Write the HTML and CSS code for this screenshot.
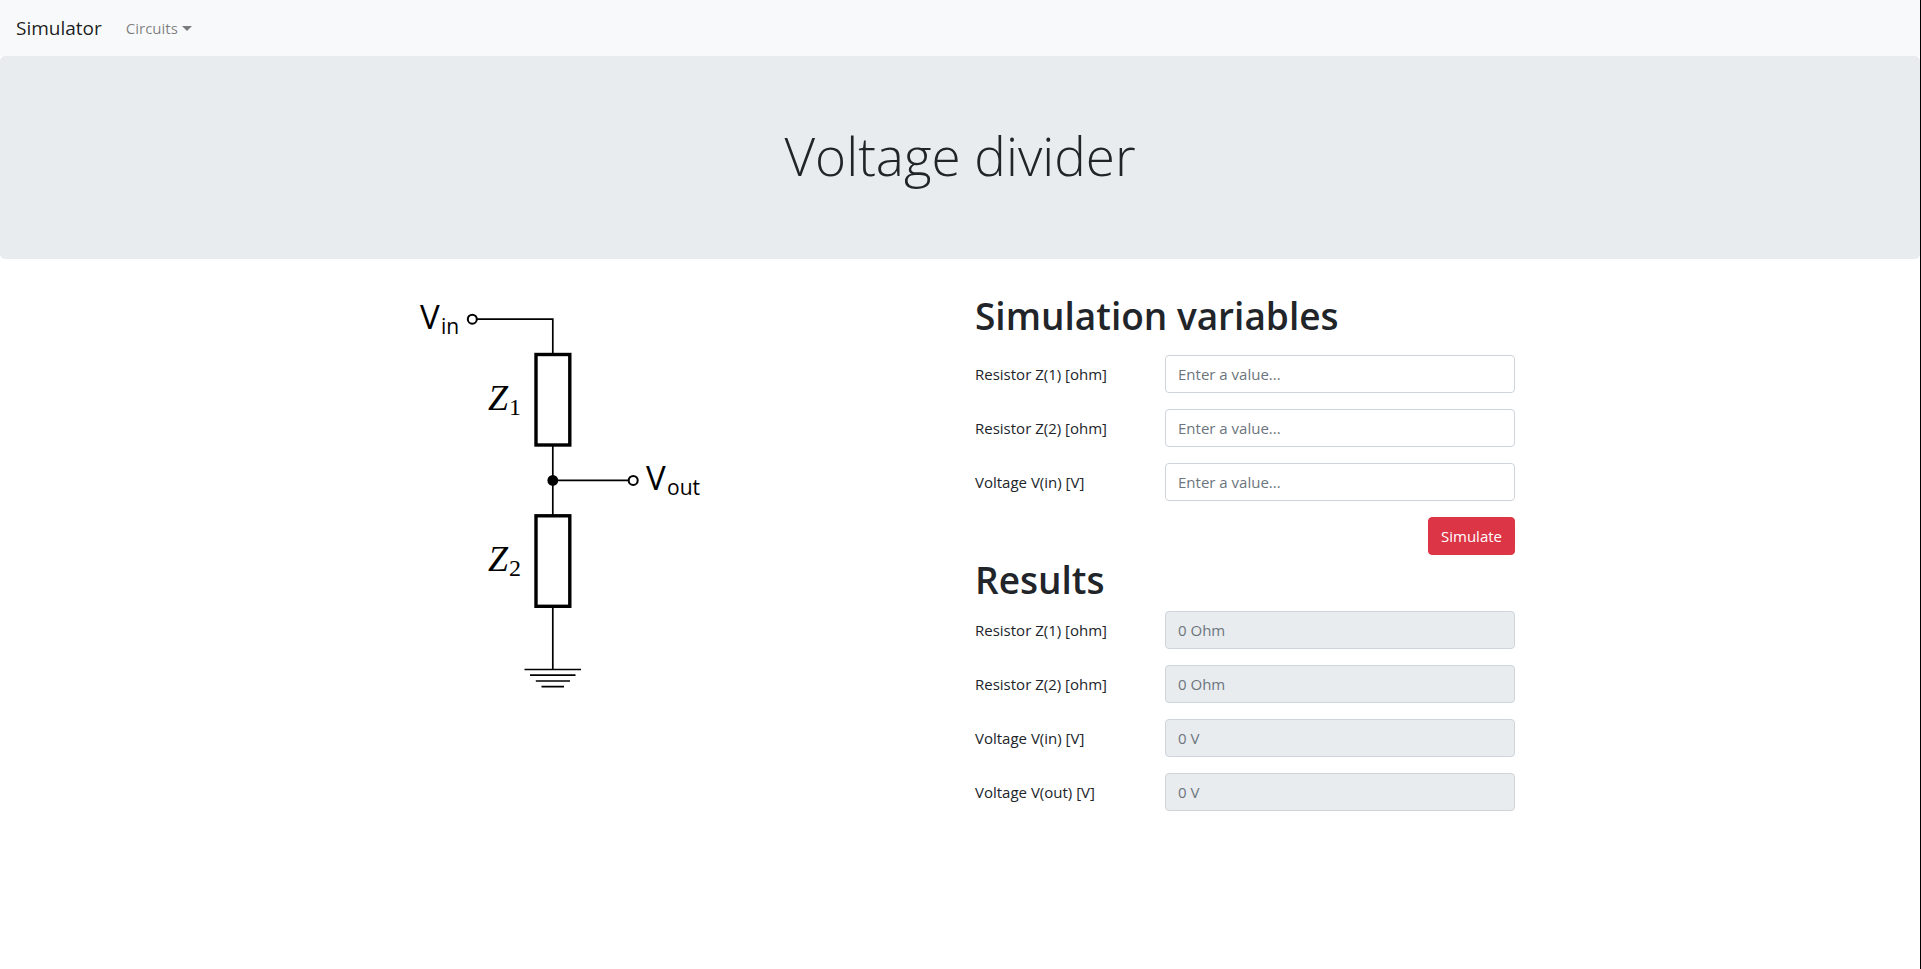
FILE: index.html
```html
<!DOCTYPE html>
<html lang="en">
<head>
<meta charset="utf-8">
<title>Voltage divider</title>
<link rel="stylesheet" href="styles.css">
</head>
<body>
<nav class="navbar">
  <a class="brand" href="#">Simulator</a>
  <button class="dropdown" type="button">Circuits<span class="caret"></span></button>
</nav>
<header class="jumbotron">
  <h1 class="display">Voltage divider</h1>
</header>
<main class="container">
  <div class="col">
    <svg class="circuit" viewBox="0 0 300 400" role="img" aria-label="Voltage divider circuit">
      <g fill="none" stroke="#000" stroke-width="1.7">
        <path d="M72 28.2H147.8V63M147.8 154V224M147.8 189.4H223.500M147.8 316V378.500"/>
        <circle cx="67.300" cy="28.200" r="4.500" stroke-width="2"/>
        <circle cx="228.200" cy="189.400" r="4.500" stroke-width="2"/>
        <path d="M119.500 378.500H176M125 384.200H170.500M130.800 390H165M136.500 395.700H159"/>
      </g>
      <g fill="#fff" stroke="#000" stroke-width="3.400">
        <rect x="131" y="63.500" width="33.800" height="90.500"/>
        <rect x="131" y="224.800" width="33.800" height="90.500"/>
      </g>
      <circle cx="147.800" cy="189.400" r="5.400"/>
      <text class="volt" x="15" y="38">V</text>
      <text class="volt-sub" x="36" y="43">in</text>
      <text class="volt" x="241" y="199">V</text>
      <text class="volt-sub" x="262" y="204">out</text>
      <text class="imp" x="83" y="119">Z</text>
      <text class="imp-sub" x="104" y="124">1</text>
      <text class="imp" x="83" y="280">Z</text>
      <text class="imp-sub" x="104" y="285">2</text>
    </svg>
  </div>
  <div class="col">
    <form class="form">
      <h2 class="heading heading-wide">Simulation variables</h2>
      <div class="row"><label for="z1">Resistor Z(1) [ohm]</label><input id="z1" type="text" placeholder="Enter a value..."></div>
      <div class="row"><label for="z2">Resistor Z(2) [ohm]</label><input id="z2" type="text" placeholder="Enter a value..."></div>
      <div class="row"><label for="vin">Voltage V(in) [V]</label><input id="vin" type="text" placeholder="Enter a value..."></div>
      <button class="submit" type="button">Simulate</button>
    </form>
    <section class="form">
      <h2 class="heading">Results</h2>
      <div class="row"><label for="rz1">Resistor Z(1) [ohm]</label><input id="rz1" type="text" placeholder="0 Ohm" readonly></div>
      <div class="row"><label for="rz2">Resistor Z(2) [ohm]</label><input id="rz2" type="text" placeholder="0 Ohm" readonly></div>
      <div class="row"><label for="rvin">Voltage V(in) [V]</label><input id="rvin" type="text" placeholder="0 V" readonly></div>
      <div class="row"><label for="rvout">Voltage V(out) [V]</label><input id="rvout" type="text" placeholder="0 V" readonly></div>
    </section>
  </div>
</main>
</body>
</html>
```
FILE: styles.css
```css
* {
  box-sizing: border-box;
}

body {
  margin: 0;
  min-height: 100vh;
  border-right: 1px solid #000;
  background: #fff;
  color: #212529;
  font: 400 15px/24px "Segoe UI", "Open Sans", "Noto Sans", sans-serif;
}

h1,
h2 {
  margin: 0;
}

.navbar {
  display: flex;
  align-items: center;
  gap: 24px;
  padding: 8px 16px;
  background: #f8f9fa;
}

.brand {
  padding: 5px 0;
  color: rgba(0, 0, 0, 0.9);
  font-size: 19px;
  line-height: 30px;
  text-decoration: none;
}

.dropdown {
  display: flex;
  align-items: center;
  gap: 4px;
  padding: 8px 0;
  border: 0;
  background: none;
  color: rgba(0, 0, 0, 0.5);
  font: inherit;
}

.caret {
  border: 5px solid transparent;
  border-top-color: currentColor;
  border-bottom: 0;
}

.jumbotron {
  padding: 66px 32px 70px;
  border-radius: 5px;
  background: #e9ecef;
  text-align: center;
}

.display {
  font-size: 53px;
  font-weight: 300;
  line-height: 67px;
}

.container {
  display: grid;
  grid-template-columns: 1fr 1fr;
  gap: 30px;
  max-width: 1140px;
  margin: 32px auto;
  padding: 0 15px;
}

.circuit {
  display: block;
  width: 300px;
  max-width: 100%;
}

.volt,
.volt-sub {
  font-family: "Open Sans", sans-serif;
  font-size: 33px;
}

.volt-sub {
  font-size: 21px;
}

.imp,
.imp-sub {
  font-family: "Liberation Serif", serif;
  font-size: 36px;
  font-style: italic;
}

.imp-sub {
  font-size: 24px;
  font-style: normal;
}

.form {
  display: flex;
  flex-direction: column;
}

.heading {
  margin-bottom: 6px;
  font-size: 37px;
  font-weight: 600;
  line-height: 50px;
}

.heading-wide {
  margin-bottom: 14px;
}

.row {
  display: grid;
  grid-template-columns: 160px 1fr;
  gap: 30px;
  margin-bottom: 16px;
}

.row label {
  padding: 7px 0;
}

.row input {
  width: 100%;
  height: 38px;
  padding: 6px 12px;
  border: 1px solid #ced4da;
  border-radius: 4px;
  background: #fff;
  color: #495057;
  font: inherit;
}

.row input::placeholder {
  color: #6c757d;
  opacity: 1;
}

.row input:read-only {
  background: #e9ecef;
}

.submit {
  align-self: flex-end;
  padding: 6px 12px;
  border: 1px solid #dc3545;
  border-radius: 4px;
  background: #dc3545;
  color: #fff;
  font: inherit;
}
```
